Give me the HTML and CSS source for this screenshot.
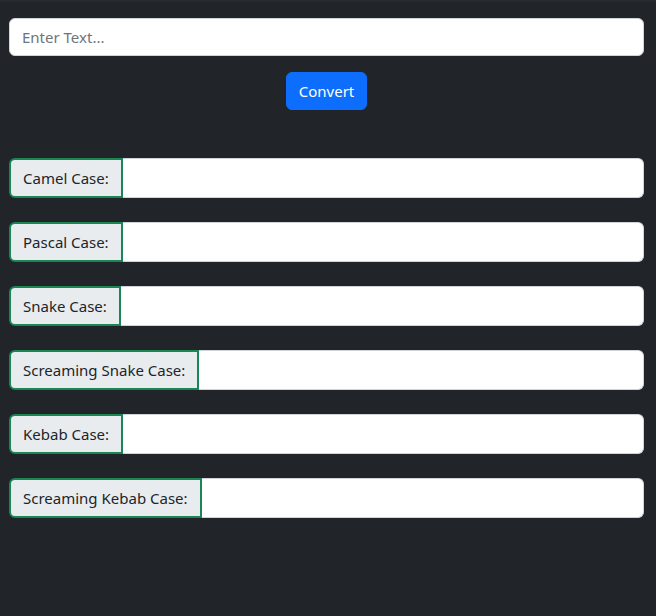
FILE: index.html
```html
<!DOCTYPE html>
<html lang="en">
<head>
<meta charset="utf-8">
<title>Case Converter</title>
<link rel="stylesheet" href="styles.css">
</head>
<body>
<div class="page">
  <input class="main-input" type="text" placeholder="Enter Text...">
  <div class="btn-row"><button class="btn">Convert</button></div>
  <div class="groups">
    <div class="group"><span class="label">Camel Case:</span><input class="field" type="text"></div>
    <div class="group"><span class="label">Pascal Case:</span><input class="field" type="text"></div>
    <div class="group"><span class="label">Snake Case:</span><input class="field" type="text"></div>
    <div class="group"><span class="label">Screaming Snake Case:</span><input class="field" type="text"></div>
    <div class="group"><span class="label">Kebab Case:</span><input class="field" type="text"></div>
    <div class="group"><span class="label">Screaming Kebab Case:</span><input class="field" type="text"></div>
  </div>
</div>
</body>
</html>
```
FILE: styles.css
```css
html, body {
  margin: 0;
  height: 100%;
}
body {
  background: #212529;
  font-family: "Noto Sans", "Open Sans", sans-serif;
  font-size: 15px;
  color: #212529;
  border-top: 2px solid #272b31;
  box-sizing: border-box;
}
.page {
  padding: 16px 12px 0 9px;
}
.main-input {
  display: block;
  width: 100%;
  box-sizing: border-box;
  height: 38px;
  padding: 6px 12px;
  font: inherit;
  color: #212529;
  background: #fff;
  border: 1px solid #ced4da;
  border-radius: 6px;
  outline: none;
}
.main-input::placeholder {
  color: #6c757d;
}
.btn-row {
  display: flex;
  justify-content: center;
  margin-top: 16px;
}
.btn {
  font: inherit;
  color: #fff;
  background: #0d6efd;
  border: 1px solid #0d6efd;
  border-radius: 6px;
  height: 38px;
  padding: 0 12px;
}
.groups {
  display: flex;
  flex-direction: column;
  gap: 24px;
  margin-top: 48px;
}
.group {
  display: flex;
  height: 40px;
}
.label {
  display: flex;
  align-items: center;
  padding: 0 12px;
  background: #e9ecef;
  border: 2px solid #198754;
  border-radius: 6px 0 0 6px;
  white-space: nowrap;
  color: #212529;
}
.field {
  flex: 1;
  min-width: 0;
  box-sizing: border-box;
  height: 40px;
  font: inherit;
  background: #fff;
  border: 1px solid #ced4da;
  border-left: none;
  border-radius: 0 6px 6px 0;
  outline: none;
  padding: 6px 12px;
}
```
